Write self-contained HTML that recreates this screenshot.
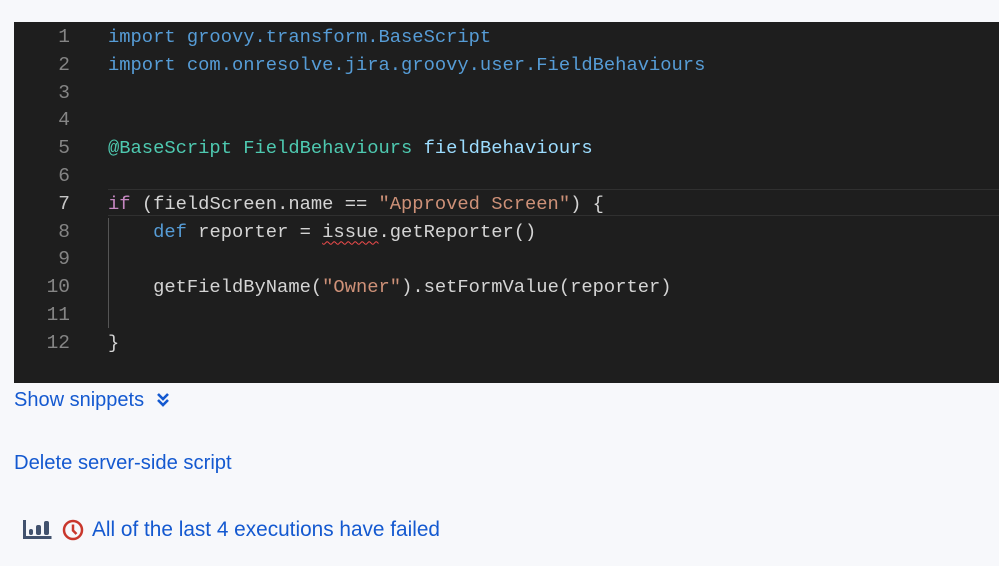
<!DOCTYPE html>
<html><head><meta charset="utf-8"><style>
body{margin:0;background:#f7f8fb;width:999px;height:566px;overflow:hidden;font-family:"Liberation Sans",sans-serif}
.ed{position:absolute;left:14px;top:22px;width:985px;height:361px;background:#1e1e1e;font-family:"Liberation Mono",monospace;font-size:18.8px}
.l{position:absolute;left:0;height:27.8px;line-height:31px;white-space:pre;width:985px}
.n{position:absolute;left:0;width:56px;text-align:right;color:#858585;font-size:19.5px}
.c{position:absolute;left:94px;color:#d4d4d4}
.k{color:#569cd6}.t{color:#4ec9b0}.v{color:#9cdcfe}.p{color:#c586c0}.s{color:#ce9178}
.cur{position:absolute;left:94px;top:167px;width:891px;height:25px;border-top:1px solid #303030;border-bottom:1px solid #303030}
.g{position:absolute;left:94px;top:196px;width:1px;height:110px;background:#555}
.sq{text-decoration:underline wavy #f14c4c;text-underline-offset:4px;text-decoration-thickness:1px}
a{position:absolute;font-size:20px;text-decoration:none;color:#1459d0}
</style></head><body>
<div class="ed">
<div class="cur"></div><div class="g"></div>
<div class="l" style="top:0"><span class="n">1</span><span class="c"><span class="k">import groovy.transform.BaseScript</span></span></div>
<div class="l" style="top:27.8px"><span class="n">2</span><span class="c"><span class="k">import com.onresolve.jira.groovy.user.FieldBehaviours</span></span></div>
<div class="l" style="top:55.6px"><span class="n">3</span></div>
<div class="l" style="top:83.4px"><span class="n">4</span></div>
<div class="l" style="top:111.2px"><span class="n">5</span><span class="c"><span class="t">@BaseScript FieldBehaviours</span> <span class="v">fieldBehaviours</span></span></div>
<div class="l" style="top:139px"><span class="n">6</span></div>
<div class="l" style="top:166.8px"><span class="n" style="color:#c6c6c6">7</span><span class="c"><span class="p">if</span> (fieldScreen.name == <span class="s">"Approved Screen"</span>) {</span></div>
<div class="l" style="top:194.6px"><span class="n">8</span><span class="c">    <span class="k">def</span> reporter = <span class="sq">issue</span>.getReporter()</span></div>
<div class="l" style="top:222.4px"><span class="n">9</span></div>
<div class="l" style="top:250.2px"><span class="n">10</span><span class="c">    getFieldByName(<span class="s">"Owner"</span>).setFormValue(reporter)</span></div>
<div class="l" style="top:278px"><span class="n">11</span></div>
<div class="l" style="top:305.8px"><span class="n">12</span><span class="c">}</span></div>
</div>
<a style="left:14px;top:389px">Show snippets <svg width="14" height="16" viewBox="0 0 14 16" style="margin-left:6px;vertical-align:-1px"><path d="M2 3l5 5 5-5M2 9l5 5 5-5" fill="none" stroke="#1459d0" stroke-width="2.6"/></svg></a>
<a style="left:14px;top:452px;font-size:20.2px">Delete server-side script</a>
<svg style="position:absolute;left:23px;top:518px" width="30" height="22" viewBox="0 0 30 22"><path d="M1.5 2v17.5h27" fill="none" stroke="#42526e" stroke-width="3"/><rect x="6" y="11" width="4" height="6" rx="2" fill="#42526e"/><rect x="13" y="7" width="5" height="10" rx="2" fill="#42526e"/><rect x="21" y="3" width="5" height="14" rx="2" fill="#42526e"/></svg>
<svg style="position:absolute;left:62px;top:519px" width="22" height="22" viewBox="0 0 22 22"><circle cx="11" cy="11" r="9" fill="none" stroke="#c9372c" stroke-width="2.5"/><path d="M11 5.5v6l3.5 3.5" fill="none" stroke="#c9372c" stroke-width="2.5"/></svg>
<a style="left:92px;top:518px;font-size:20.8px">All of the last 4 executions have failed</a>
</body></html>
